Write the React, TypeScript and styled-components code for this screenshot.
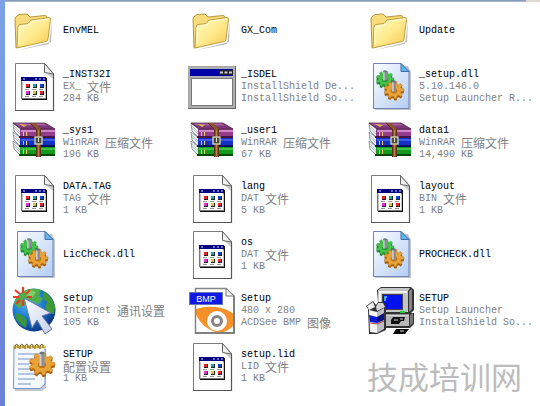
import React from 'react';
import styled, { createGlobalStyle } from 'styled-components';

const GlobalStyle = createGlobalStyle`
  * { box-sizing: border-box; }
  body { margin: 0; background: #fff; }
`;

const Explorer = styled.div`
  position: relative;
  display: flex;
  min-height: 100vh;
  background: #fff;
  overflow: hidden;
`;

const TaskPaneEdge = styled.div`
  flex: none;
  width: 5px;
  background: linear-gradient(#7ba2e7, #6b7fd8);
`;

const Pane = styled.main`
  flex: 1;
  min-width: 0;
`;

const PaneTop = styled.div`
  display: flex;
  height: 2px;
  background: linear-gradient(#7a8fb4, #b4c0d2);
`;

const ScrollCap = styled.div`
  width: 14px;
  margin-left: auto;
  background: #dcdad2;
`;

const FileGrid = styled.ul`
  display: grid;
  grid-template-columns: repeat(3, minmax(0, 1fr));
  grid-auto-rows: 56px;
  margin: 0;
  padding: 0 0 0 1px;
  list-style: none;
`;

const Tile = styled.li`
  display: flex;
  align-items: center;
  gap: 5px;
  min-width: 0;
  padding-left: 4px;
`;

const Icon = styled.svg.attrs({ viewBox: '0 0 48 48', 'aria-hidden': true })`
  flex: none;
  width: 48px;
  height: 48px;
  overflow: visible;
`;

const Label = styled.div`
  min-width: 0;
  padding-top: 2px;
`;

const Line = styled.div<{ $muted?: boolean }>`
  display: flex;
  align-items: center;
  height: 12px;
  color: ${(p) => (p.$muted ? '#808080' : '#000')};
  font-family: 'Liberation Mono', 'Noto Sans CJK SC', monospace;
  font-size: 10px;
  line-height: 12px;
  white-space: pre;
`;

const Han = styled.span`
  font-family: 'Noto Sans CJK SC', sans-serif;
  font-size: 12px;
  line-height: 12px;
`;

const Watermark = styled.div`
  position: absolute;
  right: 18px;
  bottom: 13px;
  color: #bcbcbc;
  font-family: 'Noto Sans CJK SC', sans-serif;
  font-size: 31px;
  line-height: 34px;
  white-space: nowrap;
`;

function gearPath(cx: number, cy: number, r: number, teeth: number) {
  const pts: string[] = [];
  const step = (Math.PI * 2) / teeth;
  for (let i = 0; i < teeth; i++) {
    const a = i * step;
    const corners: [number, number][] = [
      [-0.32, 0.76],
      [-0.2, 1],
      [0.2, 1],
      [0.32, 0.76],
    ];
    corners.forEach(([o, k]) => {
      const x = cx + Math.cos(a + o * step) * r * k;
      const y = cy + Math.sin(a + o * step) * r * k * 0.86;
      pts.push(`${x.toFixed(1)},${y.toFixed(1)}`);
    });
  }
  return `M${pts.join('L')}Z`;
}

function Gear({ cx, cy, r, tone }: { cx: number; cy: number; r: number; tone: 'green' | 'orange' }) {
  const [fill, edge] = tone === 'green' ? ['#46c04c', '#1f8a2c'] : ['#e9a236', '#a8620c'];
  const pin = r * 0.2;
  return (
    <g>
      <path d={gearPath(cx, cy + 2, r, 9)} fill={edge} />
      <path d={gearPath(cx, cy, r, 9)} fill={fill} stroke={edge} strokeWidth=".4" />
      <ellipse cx={cx} cy={cy + 1} rx={r * 0.32} ry={r * 0.24} fill={edge} opacity=".7" />
      <rect x={cx - pin} y={cy - r * 0.85} width={pin * 2} height={r} fill="#8a9094" />
      <rect x={cx - pin} y={cy - r * 0.85} width={pin * 0.8} height={r} fill="#c8ccce" />
      <ellipse cx={cx} cy={cy - r * 0.85} rx={pin} ry={pin * 0.6} fill="#70777c" />
    </g>
  );
}

const FolderIcon = () => (
  <Icon>
    <defs>
      <linearGradient id="folderFront" x1="0" y1="0" x2="1" y2="1">
        <stop offset="0" stopColor="#fffbc4" />
        <stop offset=".5" stopColor="#ffeb8f" />
        <stop offset="1" stopColor="#f5c74e" />
      </linearGradient>
    </defs>
    <path d="M9 44L39 38L42 15L41 36Z" fill="#777" opacity=".5" />
    <path d="M6 42L5 13Q5 11 7 10L9 8.500L17 8L20 11L35 9.500Q37 9.500 37 12V34Z" fill="#f8dc7c" stroke="#b7953b" />
    <path d="M7 41.500L8 21Q8 19 10 18.500L18 17.500L21 14L39 11.500Q41 11.500 40.500 13.500L38 33Q38 35 36 35.500L9 41.500Q7 42 7 41.500Z" fill="url(#folderFront)" stroke="#b7953b" strokeWidth=".9" />
    <path d="M9 38L9 21L19 19L22 15.500L39 13" fill="none" stroke="#fffde0" />
  </Icon>
);

const FileIcon = () => (
  <Icon>
    <path d="M5.500 1.500H34.500L43.500 11.500V48.500H5.500Z" fill="#fefefe" stroke="#7c7c7c" />
    <path d="M43.500 12V48.500H5" fill="none" stroke="#555" strokeWidth="1.200" />
    <path d="M36 10.500L43 12V17Z" fill="#c9c9c9" />
    <path d="M34.500 1.500V10.500L43.500 12Z" fill="#efefef" stroke="#666" />
    <rect x="12" y="16" width="25" height="22" fill="#111" />
    <rect x="11.500" y="15.500" width="24" height="21" fill="#fff" stroke="#777" />
    <rect x="11" y="15" width="25" height="4" fill="#000080" />
    <path d="M13 17h2M25 17h2M29 17h2M33 17h2" stroke="#d7daf6" />
    <path d="M12.500 20V36M35.500 20V36" stroke="#c4c4c4" />
    {[
      ['#e52222', '#17a7ac', '#1644d2'],
      ['#de31c8', '#dfc51e', '#e02626'],
    ].map((row, r) =>
      row.map((c, i) => (
        <g key={c + i}>
          <rect x={16 + i * 7} y={22 + r * 7} width="4" height="4" fill="#222" />
          <rect x={16 + i * 7} y={22 + r * 7} width="3" height="3" fill={c} />
          <path d={`M${15 + i * 7} ${27.5 + r * 7}h4`} stroke="#999" />
        </g>
      )),
    )}
  </Icon>
);

const WindowIcon = () => (
  <Icon>
    <rect x="0" y="4" width="48" height="43" fill="#666" />
    <path d="M0 46V4H47V5H1V46Z" fill="#a4a4a4" />
    <rect x="1" y="5" width="46" height="41" fill="#b0b0b0" />
    <rect x="2" y="7" width="43" height="7" fill="#0000a8" />
    <rect x="31" y="8" width="14" height="5" fill="#222" />
    <path d="M32 10.500h3M36.500 10.500h3M41 10.500h3" stroke="#ccc" strokeWidth="2" />
    <rect x="3.500" y="16.500" width="41" height="27" fill="#fff" stroke="#777" />
  </Icon>
);

const LibraryIcon = () => (
  <Icon>
    <defs>
      <linearGradient id="bluePage" x1="0" y1="0" x2="1" y2="1">
        <stop offset="0" stopColor="#fbfdff" />
        <stop offset="1" stopColor="#b4cef4" />
      </linearGradient>
    </defs>
    <path d="M9 4H42L45 10V48H9Z" fill="#7c8290" opacity=".45" />
    <path d="M7.500 1.500H35L43 9.500V46.500H7.500Z" fill="url(#bluePage)" stroke="#7183b4" />
    <path d="M35 1.500V9.500H43Z" fill="#68b4ed" stroke="#3d70ae" />
    <Gear cx={19} cy={17} r={9} tone="green" />
    <Gear cx={28} cy={28} r={10} tone="orange" />
  </Icon>
);

const ArchiveIcon = () => (
  <Icon>
    {[
      { y: 29, face: '#159a1e', light: '#3fc142', dark: '#06470a' },
      { y: 20, face: '#1530c4', light: '#3c5ce8', dark: '#06105e' },
      { y: 11, face: '#943c8a', light: '#cf86c6', dark: '#461542' },
    ].map((b) => (
      <g key={b.y}>
        <path d={`M3 ${b.y - 6}L11 ${b.y}V${b.y + 9}L4 ${b.y + 2}Z`} fill="#edf0f2" stroke="#637178" strokeWidth=".7" />
        <path d={`M4 ${b.y - 3}L10 ${b.y + 3}M4 ${b.y - 1}L10 ${b.y + 5}`} stroke="#9cabb2" strokeWidth=".6" />
        <rect x="10" y={b.y} width="35" height="9" fill={b.face} />
        <path d={`M11 ${b.y + 2}H45`} stroke={b.light} strokeWidth="2" />
        <path d={`M9 ${b.y + 8}H45`} stroke={b.dark} strokeWidth="2" />
        <path d={`M13.500 ${b.y + 3}v4M16.500 ${b.y + 3}v4`} stroke="#ecd16a" />
      </g>
    ))}
    <path d="M3 5H35L45 11H11Z" fill="#7d3677" stroke="#4b2348" strokeWidth=".8" />
    <path d="M5 5.500H34L37 7.500H8Z" fill="#a36199" />
    <path d="M9 6L17 7L14 9Z" fill="#e2b943" />
    <path d="M20 5H25L31 11V39H26V11Z" fill="#8d542a" />
    <path d="M26.500 11V39M30.500 11V39M20 5L26 11" stroke="#4b2b18" strokeWidth=".8" />
    <path d="M28.500 12V38" stroke="#bc8147" />
    <rect x="25" y="19" width="7" height="7" fill="#4c4c3e" stroke="#d8d8c8" strokeWidth="1.300" />
    <path d="M28.500 20V24" stroke="#e9e4c4" />
  </Icon>
);

const GlobeIcon = () => (
  <Icon>
    <defs>
      <radialGradient id="ocean" cx=".35" cy=".3" r=".75">
        <stop offset="0" stopColor="#58c1f4" />
        <stop offset=".55" stopColor="#1673ca" />
        <stop offset="1" stopColor="#0b347f" />
      </radialGradient>
      <linearGradient id="pointer" x1="0" y1="0" x2="1" y2="1">
        <stop offset="0" stopColor="#fff" />
        <stop offset="1" stopColor="#c3cfee" />
      </linearGradient>
    </defs>
    <circle cx="24" cy="24" r="21.500" fill="url(#ocean)" />
    <path d="M14 5Q22 1 31 4L29 10L33 13L28 18L20 14L15 19L8 22L4 17Q7 9 14 5Z" fill="#4fae48" />
    <path d="M33 5Q42 10 45 20L44 28L38 27L35 21L37 16L33 12Z" fill="#3f9a36" />
    <path d="M5 27L12 29L17 34L16 42Q8 38 5 31Z" fill="#3a9440" />
    <path d="M16 5Q22 3 26 6L23 11L17 11Z" fill="#96d878" opacity=".7" />
    <path d="M14 12L41 27L32 30L42 43L35 48L27 34L22 42Z" fill="url(#pointer)" stroke="#6775a8" />
    <path
      d="M13 1V7M13 14V20M3 11H9M17 11H22M5 4L10 8M20 4L16 8M6 18L10 14"
      stroke="#ed3a2a"
      strokeWidth="2.200"
    />
  </Icon>
);

const SettingsIcon = () => (
  <Icon>
    <path d="M5 7H36V46L32 49H5Z" fill="#7c8290" opacity=".45" />
    <path d="M4 5.500H35V42L30 46.500H3.500Z" fill="#f4f8ff" stroke="#7398cc" />
    <path d="M8 12H30M8 17H24M8 22H19M8 27H22M8 32H24M8 37H25M8 42H21" stroke="#7793c4" />
    <path d="M3 5H36" stroke="#e8cb61" strokeWidth="3" />
    {[6, 11, 16, 21, 26, 31].map((x) => (
      <path key={x} d={`M${x - 1} 7V4Q${x} 1 ${x + 2} 3V6`} fill="none" stroke="#6b5920" />
    ))}
    <Gear cx={32} cy={22} r={13} tone="orange" />
  </Icon>
);

const BitmapIcon = () => (
  <Icon>
    <path d="M7.500 2.500H38L46 10V47H7.500Z" fill="#fff" stroke="#858585" strokeWidth="1.500" />
    <path d="M8 23Q17 20 27 21Q38 22 46 28V39Q38 48 27 46Q15 42 8 29Z" fill="#f5902b" />
    <circle cx="29" cy="35" r="10" fill="#fff" />
    <circle cx="29" cy="35" r="4.500" fill="#fff" stroke="#858585" strokeWidth="3" />
    <path d="M46 10V47H7" fill="none" stroke="#777" strokeWidth="1.600" />
    <path d="M38 2.500V10H46Z" fill="#f1f1f1" stroke="#777" />
    <rect x="1.500" y="6.500" width="33" height="12" fill="#1118e4" stroke="#6477b8" />
    <text x="18" y="16" textAnchor="middle" fill="#fff" fontFamily="Liberation Sans, sans-serif" fontSize="9">
      BMP
    </text>
  </Icon>
);

const InstallerIcon = () => (
  <Icon>
    <path d="M11 4L15 1H45L48 4V24L44 28H13Z" fill="#333" />
    <path d="M12 4L15 2H44L42 5V26H12Z" fill="#c4c4c4" />
    <path d="M43 5L46 3V23L43 26Z" fill="#858585" />
    <path d="M13 5H41V7H15V25H13Z" fill="#f1f1f1" />
    <rect x="16" y="8" width="21" height="16" fill="#444" />
    <rect x="17" y="9" width="19" height="14" fill="#0010ef" />
    <path d="M19 15V11H21" fill="none" stroke="#50d8ef" strokeWidth="1.500" />
    <path d="M34 26H39" stroke="#1cd43a" strokeWidth="2" />
    <path d="M19 29L22 27H48V38L44 42H19Z" fill="#333" />
    <path d="M20 29H43V40H20Z" fill="#b8b8b8" />
    <path d="M44 29L47 27V37L44 40Z" fill="#777" />
    <path d="M20 29H43" stroke="#efefef" />
    <path d="M25 34L27 31H39L38 35H35L33 38H25Z" fill="#111" />
    <path d="M28 34H32M34 33H37" stroke="#ccc" />
    <path d="M2 23L0 20L7 15L10 19L12 16H18L20 20V44L11 48H3Z" fill="#333" />
    <path d="M3 24L11 26V47L4 46Z" fill="#f5f5f5" />
    <path d="M11 26L18 22V43L11 47Z" fill="#bdbdc8" />
    <path d="M1 20L7 16L9 21L3 24Z" fill="#eee" />
    <path d="M10 21L12 17H17L19 21L11 25Z" fill="#d4d4d4" />
    <path d="M3 29L11 31V37L4 36Z" fill="#0718cf" />
    <path d="M11 31L18 27V34L11 37Z" fill="#081278" />
    <path d="M4 37L11 38L18 35" stroke="#b53a48" fill="none" />
    <path d="M30 43H43L39 48H27Z" fill="#080808" />
    <path d="M34 45h4" stroke="#ddd" />
  </Icon>
);

const icons = {
  folder: FolderIcon,
  file: FileIcon,
  window: WindowIcon,
  library: LibraryIcon,
  archive: ArchiveIcon,
  globe: GlobeIcon,
  settings: SettingsIcon,
  bitmap: BitmapIcon,
  installer: InstallerIcon,
};

interface Entry {
  kind: keyof typeof icons;
  name: string;
  details?: string[];
}

const entries: Entry[] = [
  { kind: 'folder', name: 'EnvMEL' },
  { kind: 'folder', name: 'GX_Com' },
  { kind: 'folder', name: 'Update' },
  { kind: 'file', name: '_INST32I', details: ['EX_ 文件', '284 KB'] },
  { kind: 'window', name: '_ISDEL', details: ['InstallShield De...', 'InstallShield So...'] },
  { kind: 'library', name: '_setup.dll', details: ['5.10.146.0', 'Setup Launcher R...'] },
  { kind: 'archive', name: '_sys1', details: ['WinRAR 压缩文件', '196 KB'] },
  { kind: 'archive', name: '_user1', details: ['WinRAR 压缩文件', '67 KB'] },
  { kind: 'archive', name: 'data1', details: ['WinRAR 压缩文件', '14,490 KB'] },
  { kind: 'file', name: 'DATA.TAG', details: ['TAG 文件', '1 KB'] },
  { kind: 'file', name: 'lang', details: ['DAT 文件', '5 KB'] },
  { kind: 'file', name: 'layout', details: ['BIN 文件', '1 KB'] },
  { kind: 'library', name: 'LicCheck.dll' },
  { kind: 'file', name: 'os', details: ['DAT 文件', '1 KB'] },
  { kind: 'library', name: 'PROCHECK.dll' },
  { kind: 'globe', name: 'setup', details: ['Internet 通讯设置', '105 KB'] },
  { kind: 'bitmap', name: 'Setup', details: ['480 x 280', 'ACDSee BMP 图像'] },
  { kind: 'installer', name: 'SETUP', details: ['Setup Launcher', 'InstallShield So...'] },
  { kind: 'settings', name: 'SETUP', details: ['配置设置', '1 KB'] },
  { kind: 'file', name: 'setup.lid', details: ['LID 文件', '1 KB'] },
];

function MixedText({ text }: { text: string }) {
  const parts = text.split(/([\u4e00-\u9fff]+)/).filter(Boolean);
  return (
    <>
      {parts.map((part, i) =>
        /[\u4e00-\u9fff]/.test(part) ? <Han key={i}>{part}</Han> : <span key={i}>{part}</span>,
      )}
    </>
  );
}

function FileTile({ kind, name, details = [] }: Entry) {
  const Glyph = icons[kind];
  return (
    <Tile>
      <Glyph />
      <Label>
        <Line>{name}</Line>
        {details.map((d) => (
          <Line key={d} $muted>
            <MixedText text={d} />
          </Line>
        ))}
      </Label>
    </Tile>
  );
}

export default function App() {
  return (
    <>
      <GlobalStyle />
      <Explorer lang="zh-CN">
        <TaskPaneEdge />
        <Pane>
          <PaneTop>
            <ScrollCap />
          </PaneTop>
          <FileGrid>
            {entries.map((entry, i) => (
              <FileTile key={i} {...entry} />
            ))}
          </FileGrid>
        </Pane>
        <Watermark>技成培训网</Watermark>
      </Explorer>
    </>
  );
}
